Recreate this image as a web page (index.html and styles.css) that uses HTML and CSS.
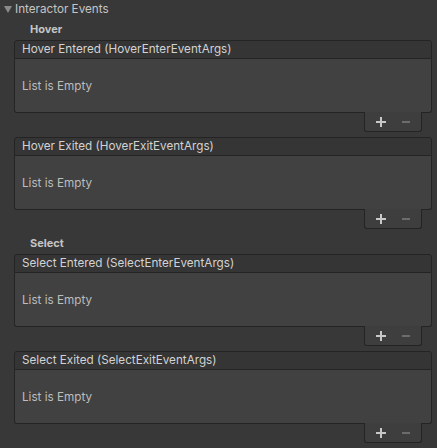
FILE: index.html
```html
<!DOCTYPE html>
<html>
<head>
<meta charset="utf-8">
<link rel="stylesheet" href="styles.css">
</head>
<body>
<div class="inspector">
  <div class="foldout">
    <svg class="arrow" width="8" height="7" viewBox="0 0 8 7"><path d="M0 0 H8 L4 7 Z" fill="#8a8a8a"/></svg>
    <span>Interactor Events</span>
  </div>

  <div class="group-label">Hover</div>
  <div class="event">
    <div class="event-header">Hover Entered (HoverEnterEventArgs)</div>
    <div class="event-body">List is Empty</div>
    <div class="event-footer"><span class="btn plus"></span><span class="btn minus"></span></div>
  </div>
  <div class="event">
    <div class="event-header">Hover Exited (HoverExitEventArgs)</div>
    <div class="event-body">List is Empty</div>
    <div class="event-footer"><span class="btn plus"></span><span class="btn minus"></span></div>
  </div>

  <div class="group-label">Select</div>
  <div class="event">
    <div class="event-header">Select Entered (SelectEnterEventArgs)</div>
    <div class="event-body">List is Empty</div>
    <div class="event-footer"><span class="btn plus"></span><span class="btn minus"></span></div>
  </div>
  <div class="event">
    <div class="event-header">Select Exited (SelectExitEventArgs)</div>
    <div class="event-body">List is Empty</div>
    <div class="event-footer"><span class="btn plus"></span><span class="btn minus"></span></div>
  </div>
</div>
</body>
</html>
```

FILE: styles.css
```css
html, body {
  margin: 0;
  padding: 0;
  background: #383838;
}
body {
  font-family: Inter, "Noto Sans", sans-serif;
  font-size: 11.7px;
  color: #c4c4c4;
}
.inspector {
  width: 437px;
  height: 448px;
  overflow: hidden;
}
.foldout {
  height: 18px;
  display: flex;
  align-items: center;
  padding-left: 4px;
  gap: 3px;
  font-size: 11.7px;
}
.arrow {
  margin-top: 1px;
}
.group-label {
  height: 22px;
  line-height: 22px;
  padding-left: 30px;
  font-weight: 700;
  font-size: 11px;
}
.event + .group-label {
  margin-top: 3px;
}
.event {
  margin-left: 14px;
  width: 418px;
  height: 92px;
  display: flex;
  flex-direction: column;
}
.event + .event {
  margin-top: 5px;
}
.event-header {
  height: 17px;
  line-height: 17px;
  background: #353535;
  border: 1px solid #242424;
  border-radius: 3px 3px 0 0;
  padding-left: 7px;
  color: #d2d2d2;
  font-size: 11.7px;
  white-space: nowrap;
}
.event-body {
  height: 53px;
  line-height: 55px;
  background: #414141;
  border: 1px solid #242424;
  border-top: none;
  border-radius: 0 0 3px 3px;
  padding-left: 7px;
  color: #bdbdbd;
  font-size: 11.7px;
}
.event-footer {
  align-self: flex-end;
  margin-right: 10px;
  margin-top: -1px;
  width: 55px;
  height: 19px;
  background: #3e3e3e;
  border: 1px solid #242424;
  border-top: none;
  border-radius: 0 0 3px 3px;
  display: flex;
  align-items: center;
  justify-content: center;
  gap: 15px;
  padding-left: 1px;
}
.btn {
  position: relative;
  width: 10px;
  height: 10px;
  display: block;
}
.btn::before, .plus::after {
  content: "";
  position: absolute;
  background: #c8c8c8;
}
.btn::before {
  left: 0;
  top: 4px;
  width: 10px;
  height: 2px;
}
.plus::after {
  left: 4px;
  top: 0;
  width: 2px;
  height: 10px;
}
.minus::before {
  background: #6c6c6c;
  left: 1px;
  width: 8px;
}
```
